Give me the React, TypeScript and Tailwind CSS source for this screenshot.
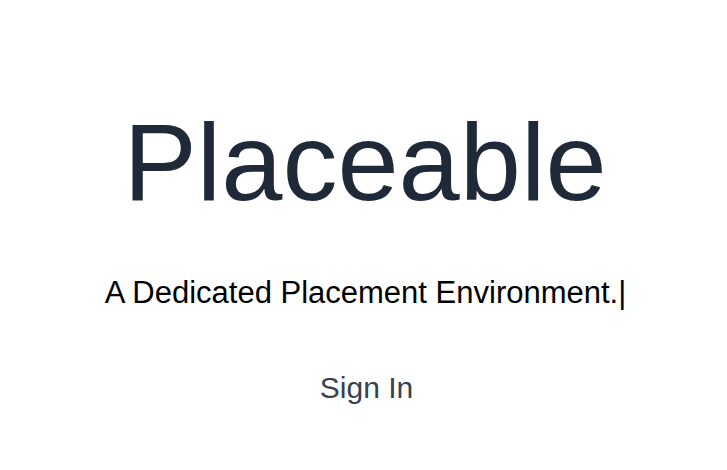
import React from "react";

export default function App() {
  return (
    <div
      className="min-h-screen w-full bg-white flex flex-col items-center pt-[107px]"
      style={{ fontFamily: '"Liberation Sans", Arial, sans-serif' }}
    >
      <h1 className="text-[110px] leading-none text-[#1f2937] font-normal pl-[3px]">Placeable</h1>
      <p className="mt-[60px] text-[31px] leading-none text-black pl-[4px]">
        A Dedicated Placement Environment.|
      </p>
      <button className="mt-[65px] text-[30px] leading-none text-[#374151] pl-[6px]">Sign In</button>
    </div>
  );
}
